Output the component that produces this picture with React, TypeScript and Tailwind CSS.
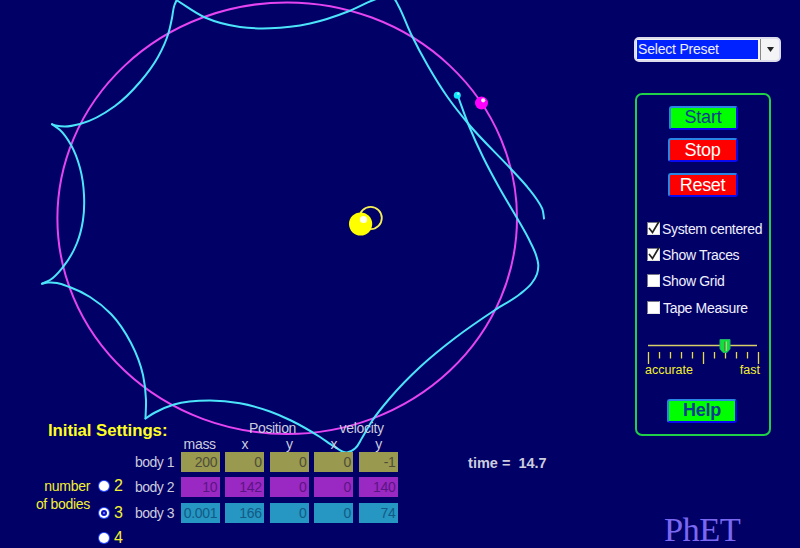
import React from 'react';

type Point = [number, number];

// Each list is one arc of the small body's trace, the arcs meet in cusps
const traceArcs: Point[][] = [
  [[544, 218.5], [542.5, 209.5], [536.5, 199], [526.5, 186], [511, 169], [468.5, 124], [447.5, 97], [428, 66], [411, 34], [398, 5], [394.5, -1], [389, -5]],
  [[389, -5], [373.5, 0], [348, 11.5], [310, 23.5], [270, 28.3], [240, 27], [205, 17.5], [177, 0.5]],
  [[176.5, 0.5], [174.5, 5], [172, 18], [168.5, 33], [158, 57], [140, 82], [115, 106], [80, 124], [65, 126.5], [57, 125.8], [52, 124.3]],
  [[52, 124.3], [60, 130], [71, 145], [80, 168], [84, 195], [83, 220], [77, 243], [63, 267], [50, 280], [42, 283.7]],
  [[42, 283.7], [48, 282.6], [57, 283], [69, 286.8], [90, 297], [111, 314], [131, 343], [143, 375], [146, 400], [145.5, 418.5]],
  [[145.5, 418.5], [155, 412.5], [174, 404.5], [210, 400.5], [240, 403.3], [270, 411.5], [291, 420.5], [320, 437], [335, 447], [347, 452.5], [355, 448.5], [362, 438], [372, 421], [390, 398], [420, 367], [455, 338], [495, 310], [520, 294], [531.5, 283.5], [537, 274], [538.3, 265], [536, 255], [530, 241.5], [517, 218], [500, 189], [483, 157], [469, 126], [457.5, 95]],
];

const unit = (a: Point, b: Point) => {
  const length = Math.hypot(b[0] - a[0], b[1] - a[1]) || 1;
  return { x: (b[0] - a[0]) / length, y: (b[1] - a[1]) / length, length };
};

// Smooth line through all points, the nearer neighbour counts more for the tangent
const smoothPath = (pts: Point[]) => {
  const tangents = pts.map((p, i) => {
    if (i === 0) return unit(p, pts[1]);
    if (i === pts.length - 1) return unit(pts[i - 1], p);
    const a = unit(pts[i - 1], p);
    const b = unit(p, pts[i + 1]);
    const x = a.x * b.length + b.x * a.length;
    const y = a.y * b.length + b.y * a.length;
    const n = Math.hypot(x, y) || 1;
    return { x: x / n, y: y / n };
  });
  let d = `M${pts[0][0]} ${pts[0][1]}`;
  for (let i = 0; i < pts.length - 1; i++) {
    const [p, q] = [pts[i], pts[i + 1]];
    const [s, t] = [tangents[i], tangents[i + 1]];
    const h = unit(p, q).length / 3;
    d += `C${p[0] + s.x * h} ${p[1] + s.y * h} ${q[0] - t.x * h} ${q[1] - t.y * h} ${q[0]} ${q[1]}`;
  }
  return d;
};

const bodies = [
  { name: 'body 1', row: 'mt-0', color: 'bg-[#99994f] text-[#4d4d38]', values: ['200', '0', '0', '0', '-1'] },
  { name: 'body 2', row: 'mt-[5px]', color: 'bg-[#9a28c2] text-[#5a1584]', values: ['10', '142', '0', '0', '140'] },
  { name: 'body 3', row: 'mt-[6px]', color: 'bg-[#2696c2] text-[#125a86]', values: ['0.001', '166', '0', '0', '74'] },
];

const OrbitCanvas = () => {
  return (
    <svg className="absolute inset-0" width="800" height="548" viewBox="0 0 800 548" fill="none">
      <ellipse cx="287.2" cy="218.2" rx="229.8" ry="215.8" stroke="#e545f0" strokeWidth="2" />
      {traceArcs.map((arc, i) => (
        <path key={i} d={smoothPath(arc)} stroke="#4ce4fb" strokeWidth="2" strokeLinejoin="round" strokeLinecap="round" />
      ))}
      <circle cx="370.6" cy="218" r="11.2" stroke="#f6ee55" strokeWidth="1.8" />
      <circle cx="360.6" cy="224" r="11.6" fill="#ffff00" />
      <circle cx="363.5" cy="219.5" r="3.6" fill="#fffff0" />
      <circle cx="481.5" cy="103" r="6.5" fill="#ff00ff" />
      <circle cx="483.2" cy="100.3" r="2.1" fill="#ffe6ff" />
      <circle cx="457.3" cy="95.2" r="3.5" fill="#10e8fb" />
      <circle cx="458.3" cy="93.8" r="1.2" fill="#a8faff" />
    </svg>
  );
};

const Radio = ({ label, checked }: { label: string; checked?: boolean }) => (
  <div className="flex h-5 items-center gap-[5px]">
    <span className="flex h-[10px] w-[10px] items-center justify-center rounded-full bg-white ring-1 ring-[#2a4cff]">
      {checked && (
        <span className="flex h-[6px] w-[6px] items-center justify-center rounded-full bg-[#0a10c8]">
          <span className="h-[2px] w-[2px] rounded-full bg-[#8890e8]" />
        </span>
      )}
    </span>
    <span className="text-[16px] leading-5 text-[#f4f032]">{label}</span>
  </div>
);

const InitialSettings = () => {
  return (
    <div className="pt-[420px]">
      <div className="flex h-[17px] text-[14px] leading-[16px] tracking-[-0.35px] text-[#ccccdf]">
        <h2 className="w-[249px] pl-12 text-[16.8px] leading-[22px] font-bold tracking-[-0.05px] text-[#ffff22]">Initial Settings:</h2>
        <span className="w-[90.5px]">Position</span>
        <span className="tracking-[-0.3px]">velocity</span>
      </div>

      <div className="flex">
        <div className="flex w-[135px] pt-[39px]">
          <div className="w-[90px] pt-[1px] text-right text-[14px] leading-[18px] tracking-[-0.3px] text-[#f4f032]">
            number
            <br />
            of bodies
          </div>
          <div className="ml-[9px]">
            <Radio label="2" />
            <div className="mt-[7px]">
              <Radio label="3" checked />
            </div>
            <div className="mt-[5px]">
              <Radio label="4" />
            </div>
          </div>
        </div>

        <div>
          <div className="ml-[45.7px] grid h-[15px] grid-cols-[repeat(5,39px)] gap-[5.6px] text-center text-[14px] leading-[15px] tracking-[-0.3px] text-[#ccccdf]">
            <span className="-ml-px">mass</span>
            <span>x</span>
            <span>y</span>
            <span>x</span>
            <span>y</span>
          </div>
          {bodies.map((body) => (
            <div key={body.name} className={`flex h-5 ${body.row}`}>
              <span className="w-[45.7px] text-[14px] leading-5 tracking-[-0.5px] text-[#ccccdf]">{body.name}</span>
              <div className="grid grid-cols-[repeat(5,39px)] gap-[5.6px] text-right text-[14px] leading-5 tracking-[-0.3px]">
                {body.values.map((value, i) => (
                  <span key={i} className={`pr-[2.5px] ${body.color}`}>{value}</span>
                ))}
              </div>
            </div>
          ))}
        </div>

        <div className="ml-[70px] pt-[16px] text-[14.5px] leading-5 font-bold whitespace-pre text-[#ccccdf]">time =  14.7</div>
      </div>
    </div>
  );
};

const CheckRow = ({ label, checked, className }: { label: string; checked?: boolean; className: string }) => (
  <div className={`flex items-center ${className}`}>
    <span className="-mt-[2px] h-[13px] w-[13px] border border-t-[#777788] border-r-[#e4e4e4] border-b-[#e4e4e4] border-l-[#777788] bg-white">
      {checked && (
        <svg className="-mt-px overflow-visible" width="12" height="13" viewBox="0 0 12 13" fill="none">
          <path d="M1 6L4.500 10.500L11 -0.500" stroke="#222" strokeWidth="1.7" />
        </svg>
      )}
    </span>
    <span className="text-[14px] tracking-[-0.33px] whitespace-nowrap text-[#f0f0ff]">{label}</span>
  </div>
);

const button = 'flex items-center justify-center rounded-[3px] border-2 border-t-[#2a86e4] border-l-[#2a86e4] border-r-[#0a0af0] border-b-[#0a0af0]';

const SpeedSlider = () => {
  return (
    <div className="mt-[19px] ml-[8px]">
      <svg className="ml-[2px]" width="114" height="27" viewBox="0 0 114 27" fill="none">
        <path d="M1 8.500H110" stroke="#d8cf68" strokeWidth="1.5" />
        {Array.from({ length: 11 }, (_, i) => (
          <path key={i} d={`M${1.5 + i * 11} 15V${i % 5 === 0 ? 27 : 21.5}`} stroke="#e6dc48" strokeWidth="1.3" />
        ))}
        <path d="M73 2.500H83V12L80 15.500H76L73 12Z" fill="#12e03a" stroke="#20b068" />
        <path d="M78 4.500V14" stroke="#5a6a30" strokeWidth="1.2" />
        <path d="M79.200 4.500V14" stroke="#c8e8a0" strokeWidth="1" />
      </svg>
      <div className="flex w-[115px] justify-between text-[12.5px] leading-[13px] text-[#f4f032]">
        <span>accurate</span>
        <span>fast</span>
      </div>
    </div>
  );
};

const ControlPanel = () => {
  return (
    <div className="w-[166px] pt-[37px]">
      <div className="flex h-[25px] w-[147px] rounded-[5px] border-2 border-[#dcdcec] bg-[#f4f4f6]">
        <div className="my-px ml-px w-[121px] bg-[#0022ff] pl-px text-[14px] leading-[19px] tracking-[-0.2px] text-[#eeeeff]">Select Preset</div>
        <div className="ml-[2px] flex flex-1 items-center justify-center border-l border-[#888]">
          <svg width="7" height="5" viewBox="0 0 7 5">
            <path d="M0 0H7L3.500 5Z" fill="#222" />
          </svg>
        </div>
      </div>

      <div className="mt-[31px] ml-px h-[343px] w-[136px] rounded-[7px] border-2 border-[#1fd048] pt-[10.5px]">
        <button className={`${button} ml-[31.5px] h-6 w-[69px] bg-[#00ff00] text-[18px] tracking-[-0.2px] text-[#0c3c90]`}>Start</button>
        <button className={`${button} mt-[8.5px] ml-[30.5px] h-6 w-[70px] bg-[#ff0000] text-[18px] tracking-[-0.2px] text-white`}>Stop</button>
        <button className={`${button} mt-[11px] ml-[30.5px] h-6 w-[70px] bg-[#ff0000] text-[18px] tracking-[-0.3px] text-white`}>Reset</button>

        <CheckRow label="System centered" checked className="mt-[22px] ml-[10px] h-5 gap-[2px]" />
        <CheckRow label="Show Traces" checked className="mt-[6px] ml-[10px] h-5 gap-[2px]" />
        <CheckRow label="Show Grid" className="mt-[6px] ml-[10px] h-5 gap-[2px]" />
        <CheckRow label="Tape Measure" className="mt-[7px] ml-[10px] h-5 gap-[3px]" />

        <SpeedSlider />

        <button className={`${button} mt-[21.5px] ml-[30px] h-6 w-[70px] bg-[#00ff00] text-[18px] font-bold tracking-[-0.3px] text-[#0c3c90]`}>Help</button>
      </div>

      <div className="mt-[73px] ml-[30px] font-['Liberation_Serif',serif] text-[34.5px] leading-[40px] tracking-[-0.6px] text-[#7a68f0]">PhET</div>
    </div>
  );
};

const App = () => {
  return (
    <div className="relative h-[548px] w-[800px] overflow-hidden bg-[#000066] font-['Liberation_Sans',Arial,sans-serif]">
      <OrbitCanvas />
      <div className="relative flex h-full justify-between">
        <InitialSettings />
        <ControlPanel />
      </div>
    </div>
  );
};

export default App;
